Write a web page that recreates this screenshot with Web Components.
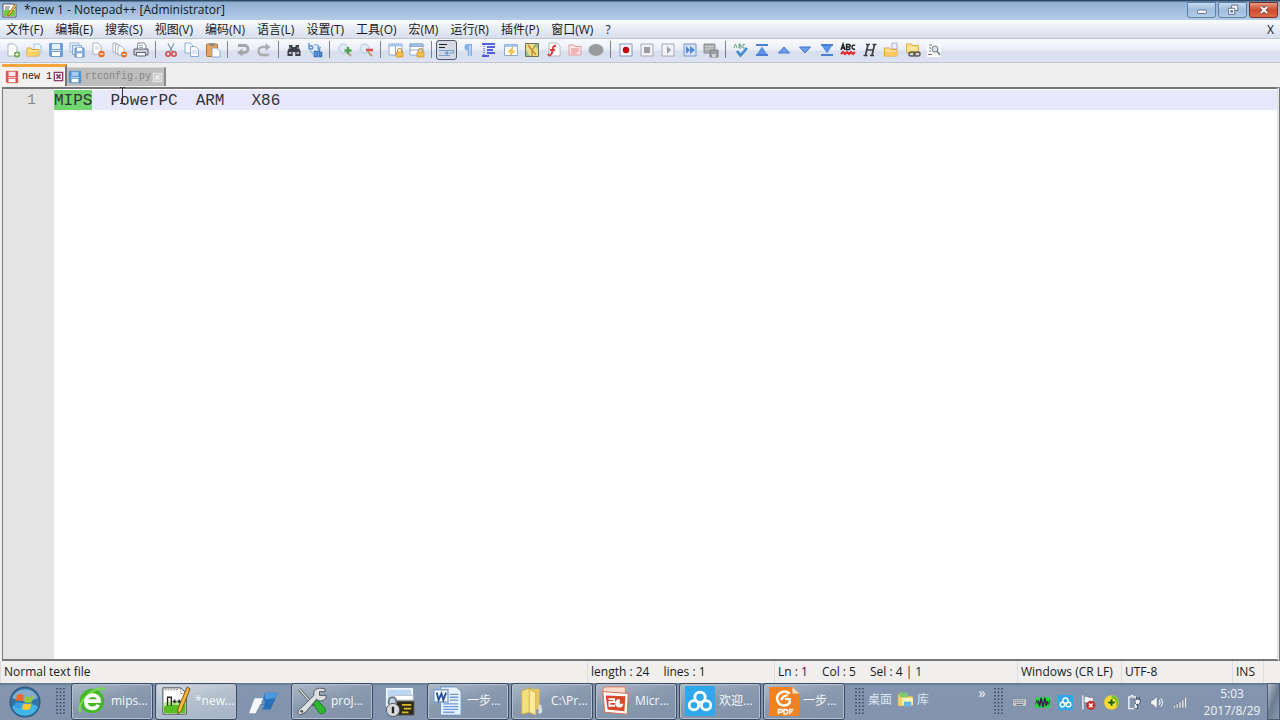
<!DOCTYPE html>
<html lang="zh-CN">
<head>
<meta charset="utf-8">
<title>*new 1 - Notepad++ [Administrator]</title>
<style>
html, body { height: 100%; margin: 0; }
body { font: 12px/16px "Open Sans", "Noto Sans", "Noto Sans CJK SC", sans-serif; color: #1a1a22; overflow: hidden; }
</style>
</head>
<body>
<np-desktop></np-desktop>
<script>
const define = (name, css, html) => {
  customElements.define(name, class extends HTMLElement {
    connectedCallback() {
      if (this.shadowRoot) return;
      const root = this.attachShadow({ mode: 'open' });
      const tpl = document.createElement('template');
      tpl.innerHTML = `<style>*{box-sizing:border-box}${css}</style>${typeof html === 'function' ? html(this) : html}`;
      root.append(tpl.content.cloneNode(true));
    }
  });
};

/* Icon artwork. Small icons use a 16 unit grid, large ones a 32 unit grid. */
const page = (x, y, w = 8, h = 10, s = '#9aa3b5') => `<path d="M${x} ${y}h${w - 3}l3 3v${h - 3}h-${w}z" fill="#fff" stroke="${s}" stroke-width=".8"/>`;
const floppy = (c, l) => `<path d="M1.500 1.500h13v13h-12l-1-1z" fill="${c}" stroke="${c}"/><path d="M4 2h8v5H4z" fill="${l}"/><path d="M4 10h8v4H4z" fill="#fff"/><path d="M3 8.500h10" stroke="#fff" stroke-width=".8"/>`;
const lock = (x, y) => `<path d="M${x + 1.5} ${y + 3}v-1.500a2 2 0 0 1 4 0V${y + 3}" fill="none" stroke="#c9973a" stroke-width="1.200"/><rect x="${x}" y="${y + 3}" width="7" height="5" rx=".5" fill="#f5bf4c" stroke="#d18f22" stroke-width=".7"/>`;
const folder = (x, y, w, h) => `<path d="M${x} ${y}h${w / 2 - 1}l1 1.500h${w / 2}V${y + h}H${x}z" fill="#ffe08a" stroke="#e0a33b" stroke-width=".9"/>`;
const ICONS = {
  app: `<path d="M1 2h10l3 3v10H1z" fill="#fff" stroke="#555"/><path d="M2 8h11v6H2z" fill="#74cc3d"/><path d="M3 5h5M3 7h4" stroke="#666"/><path d="M6 12 13 2l2 1-7 10-2 1z" fill="#edbd3c" stroke="#6c5124" stroke-width=".6"/>`,
  new: page(3, 2, 9, 12) + `<circle cx="12" cy="12.500" r="3" fill="#66a83b"/><path d="M12 10.700v3.600M10.200 12.500h3.600" stroke="#fff"/>`,
  open: `<path d="M8 2h5l2 2v7H8z" fill="#eef5fc" stroke="#8db4d8" stroke-width=".8"/><path d="M1 6h4l1 1.500h7V14H1z" fill="#ffe08a" stroke="#e0a33b"/><path d="M2 10h12l-2 4H1z" fill="#ffd061"/>`,
  save: floppy('#6f9fd8', '#e8f2ff'),
  saveall: `<path d="M1 1h9v9H1z" fill="#e6f0fc" stroke="#9bbbe0"/><path d="M3.500 3.500h9v9h-9z" fill="#e3eefb" stroke="#84aad9"/><path d="M6 6h9v9H6z" fill="#8ab2e2" stroke="#6590c8"/><path d="M8 6h5v3H8zM8 11.500h5V15H8z" fill="#fff"/>`,
  close: page(3, 1, 8, 11) + `<path d="M5 5h4M5 7h4" stroke="#bbb" stroke-width=".7"/><circle cx="11.500" cy="12" r="3.200" fill="#ec6a24"/><path d="M9.700 12h3.600" stroke="#fff" stroke-width="1.200"/>`,
  closeall: page(1, 1, 6, 9) + page(3.5, 2.5, 6, 9) + page(6, 4, 6, 9) + `<circle cx="12" cy="12.500" r="3" fill="#ec6a24"/><path d="M10.300 12.500h3.400" stroke="#fff" stroke-width="1.200"/>`,
  print: `<path d="M5 1h6l2 2v5H4z" fill="#fff" stroke="#7b8290"/><path d="M1 7h14v6H1z" fill="#c8cdd6" stroke="#5c6472"/><path d="M3.500 10.500h9V14h-9z" fill="#f5f6f9" stroke="#5c6472"/><path d="M6 3.500h4M6 5.500h4" stroke="#9aa"/>`,
  cut: `<path d="M5 1.500 9.500 10M11 1.500 6.500 10" stroke="#8294a8" stroke-width="1.200"/><circle cx="5" cy="12" r="2.200" fill="none" stroke="#d84a4a" stroke-width="1.500"/><circle cx="11" cy="12" r="2.200" fill="none" stroke="#d84a4a" stroke-width="1.500"/>`,
  copy: page(1, 1, 8, 10, '#6e9bd6') + page(6.5, 4.5, 8, 10, '#6e9bd6') + `<path d="M8 9h5M8 11h5" stroke="#b8d0ee"/>`,
  paste: `<rect x="1.500" y="2" width="11" height="12.500" rx="1" fill="#eaa35a" stroke="#b87431"/><rect x="4.500" y="1" width="5" height="3" fill="#8a8a8a"/>` + page(7, 6, 8, 9, '#6e9bd6'),
  undo: `<path d="M3 3.500h6.500a3.500 3.500 0 0 1 0 7H6" fill="none" stroke="#a3a5aa" stroke-width="2.800"/><path d="M7.500 6.500v8L2 10.500z" fill="#a3a5aa"/>`,
  redo: `<path d="M10 5H6.500a3.500 3.500 0 0 0 0 8H13" fill="none" stroke="#aaacb0" stroke-width="2.400"/><path d="M9.500 1v8L14.500 5z" fill="#aaacb0"/>`,
  find: `<path d="M3 3h3.500v2h3V3H13v3l1.500 3v5H9.300v-4H6.700v4H1.500V9L3 6z" fill="#394049"/><path d="M3 10h2.500v2H3zM10.500 10H13v2h-2.500z" fill="#aeb6c2"/><path d="M4 5v2M12 5v2" stroke="#9aa"/>`,
  replace: `<path d="M2 1v6M2 4h2.500a1.500 1.500 0 0 1 0 3H2" stroke="#5089d2" stroke-width="1.300" fill="none"/><path d="M7 3c4-1 5 1 5 4M10 5.500l2 2 1.500-2.500" fill="none" stroke="#57a0e0" stroke-width="1.200"/><path d="M7.500 9.500h3v5h-3zM12.500 7.500v7M12.500 10.500h2v4h-2z" stroke="#3975c5" stroke-width="1.600" fill="#7caae4"/><path d="M3 8.500 6 12" stroke="#57a0e0"/>`,
  zoomin: `<circle cx="6.500" cy="6.500" r="4.500" fill="#dfeaf6" stroke="#b2c7de"/><path d="m10 10 4 4" stroke="#b9a176" stroke-width="2"/><path d="M11 5v7M7.500 8.500h7" stroke="#4ea34a" stroke-width="2.400"/>`,
  zoomout: `<circle cx="6.500" cy="6.500" r="4.500" fill="#dfeaf6" stroke="#b2c7de"/><path d="m10 10 4 4" stroke="#b9a176" stroke-width="2"/><path d="M8 8h7" stroke="#e2504a" stroke-width="2.600"/>`,
  syncv: `<path d="M1 2h13v11H1z" fill="#fff" stroke="#8aa8d0"/><path d="M1 2h13v2.500H1z" fill="#a6c5ec"/><path d="M7.500 4v9" stroke="#8aa8d0"/>` + lock(8, 7),
  synch: `<path d="M1 2h13v11H1z" fill="#fff" stroke="#8aa8d0"/><path d="M1 2h13v2.500H1zM1 8h13" fill="#a6c5ec" stroke="#8aa8d0"/>` + lock(8, 7),
  wrap: `<path d="M0 2.500h8M0 5.500h6" stroke="#222" stroke-width="1.200"/><path d="M0 8.500h14.500V11H7M0 13.500h11" stroke="#7f9fd0" stroke-width="1.200" fill="none"/><path d="m9 8.500-4 2.500L9 13.500z" fill="#7f9fd0"/>`,
  pilcrow: `<path d="M7 2h5v12h-1.500V3.500H9.300V14H7.800V8.500C3.500 8.500 3.500 2 7 2z" fill="#7fb2ee"/>`,
  indent: `<path d="M1 2h13M6 5h8M6 8h6M6 11h8M1 14h7" stroke="#2433df" stroke-width="1.700"/><path d="M3 2v14" stroke="#2433df" stroke-dasharray="1 1"/>`,
  udl: `<path d="M1.500 2.500h13v11h-13z" fill="#fdfdf3" stroke="#8aa8d0"/><path d="M1.500 2.500h13V5h-13z" fill="#a6c5ec"/><path d="m10 5-5 5h3l-1 4 5-5H9z" fill="#ffc83d" stroke="#e6a522" stroke-width=".5"/>`,
  map: `<path d="M1.500 1.500h13v13h-13z" fill="#eadf86" stroke="#6d7156"/><path d="M10 2h4v6zM2 8l4 6H2z" fill="#8fc3a0"/><path d="m4 3 8 10M12 3 8 8v6" fill="none" stroke="#c68b3b" stroke-width="1.400"/>`,
  func: page(3, 1, 11, 13, '#aaa') + `<path d="M10 4c-4-1-3 4-4 7s-3 3-4 1M4 8h5" fill="none" stroke="#d93a3a" stroke-width="2"/>`,
  tree: `<path d="M2 3h5l1 1.500h6V13H2z" fill="#fbe6e6" stroke="#e79a9d"/><path d="M4 7h8M4 9h8M4 11h6" stroke="#e48488"/>`,
  monitor: `<ellipse cx="8" cy="8" rx="7.500" ry="6" fill="#999b9e"/>`,
  rec: `<path d="M2 2h12v12H2z" fill="#fafbff" stroke="#8395b5"/><circle cx="8" cy="8" r="3.200" fill="#c9050e"/>`,
  stop: `<path d="M2 2h12v12H2z" fill="#f1f2f6" stroke="#a7aab2"/><path d="M5 5h6v6H5z" fill="#9b9da3"/>`,
  play: `<path d="M2 2h12v12H2z" fill="#f1f2f6" stroke="#a7aab2"/><path d="M7 4v8l4-4z" fill="#9b9da3"/>`,
  ffwd: `<path d="M2 2h12v12H2z" fill="#d5e4fa" stroke="#7d95c2"/><path d="M4 4v8l4-4v4l5-4-5-4v4z" fill="#4b86e0"/>`,
  macrosave: `<path d="M1 2h11v9H1z" fill="#a9abad" stroke="#8c8e90"/><path d="M2 4.500h9M2 7h9" stroke="#d2d3d5"/><path d="M7 8h8v7H7z" fill="#9b9da0" stroke="#818386"/><path d="M9 12h4v3H9z" fill="#d2d3d5"/>`,
  spell: `<path d="M1 6 2.500 2 4 6M6 2v4h1.500a1 1 0 0 0 0-2H6h1a1 1 0 0 0 0-2zM12 2.500H10V6h2" fill="none" stroke="#6ba57d"/><path d="m4 9 3.500 4.500L14 6" fill="none" stroke="#3b8dd0" stroke-width="2.600"/>`,
  top: `<path d="M2 3h12M2 13h12" stroke="#4a7fd4" stroke-width="2"/><path d="M8 4.500 13 12H3z" fill="#5b93e5"/>`,
  up: `<path d="M8 5 13.500 11h-11z" fill="#6c9eea" stroke="#3f74cd"/>`,
  down: `<path d="M8 11 13.500 5h-11z" fill="#6c9eea" stroke="#3f74cd"/>`,
  bottom: `<path d="M2 3h12M2 13h12" stroke="#4a7fd4" stroke-width="2"/><path d="M8 11.500 13 4H3z" fill="#5b93e5"/>`,
  abc: `<path d="M1 8 3 2l2 6M2 6h2.500M6.500 2.500v5H9a1.300 1.300 0 0 0 0-2.500H6.500 9a1.200 1.200 0 0 0 0-2.500zM15 3.500c-4-2-4 5 0 3.500" fill="none" stroke="#1d1d1d" stroke-width="1.400"/><path d="m1 12 2-2 2 2 2-2 2 2 2-2 2 2 2-2" fill="none" stroke="#e02b2b" stroke-width="2"/>`,
  hicon: `<path d="M6 2.500 3.500 13.500M12.500 2.500 10 13.500M5 8h6.500M4 2.500h4M10.500 2.500h4M1.500 13.500h4M8 13.500h4" fill="none" stroke="#3b3f46" stroke-width="1.700"/>`,
  folderup: `<path d="M9 1h5v6H9z" fill="#eef2f6" stroke="#a9b4c2"/><path d="M1.500 6h5l1 1.500h6.500V14H1.500z" fill="#ffdf95" stroke="#e0a33b"/><path d="M2 10h12v4H2z" fill="#ffc562"/>`,
  folderlink: folder(1.5, 2, 12, 9) + `<path d="M3 6h9" stroke="#fff3c8"/><rect x="4" y="10" width="6" height="4" rx="2" fill="none" stroke="#5a5a55" stroke-width="1.500"/><rect x="9" y="10" width="6" height="4" rx="2" fill="none" stroke="#5a5a55" stroke-width="1.500"/>`,
  docfind: `<path d="M1 1h14v14H1z" fill="#fafbfd"/><path d="M3 3h3M3 6h2M3 9h2M2 12.500h4" stroke="#777"/><circle cx="9" cy="7" r="3" fill="#dbe6f2" stroke="#707884"/><path d="m11 9 3 4" stroke="#707884" stroke-width="1.600"/>`,
  diskred: floppy('#e24b4b', '#ffe6e6'),
  diskblue: floppy('#4a8fd0', '#a6cbef'),
  tabclose: `<path d="M2 2h12v12H2z" fill="#fff" stroke="currentColor" stroke-width="2"/><path d="m5 5 6 6M11 5l-6 6" stroke="currentColor" stroke-width="2.400"/>`,
  tabcloseoff: `<path d="M2 2h12v12H2z" fill="#c9c9c9" stroke="#e3e3e3" stroke-width="2"/><path d="m5 5 6 6M11 5l-6 6" stroke="#f0f0f0" stroke-width="2.400"/>`,
  min: `<rect x="3" y="8" width="10" height="4" rx="1" fill="#fff" stroke="#52617a"/>`,
  restore: `<path d="M6.500 2.500h7v6h-7z" fill="#fff" stroke="#52617a"/><path d="M3 6h7v7H3z" fill="#fff" stroke="#52617a"/><path d="M5.500 8.500h2v2h-2z" fill="#8ba3c3" stroke="#52617a"/>`,
  x: `<path d="m4.500 4.500 7 7M11.500 4.500l-7 7" stroke="#6b3636" stroke-width="4"/><path d="m4.500 4.500 7 7M11.500 4.500l-7 7" stroke="#fff" stroke-width="2.500"/>`,
  /* task bar, 32 unit grid */
  orb: `<circle cx="16" cy="16" r="15.500" fill="#2b5477"/><circle cx="16" cy="16" r="14.500" fill="#2f73a8"/><path d="M3 21a14 14 0 0 0 26 0c-7-5-19-5-26 0z" fill="#41b6e6"/><path d="M3 12a14 14 0 0 1 26 0c-8 4-18 4-26 0z" fill="#a5bfd2" opacity=".75"/><path d="M8 9c3-1.500 5-1 7 .500l-1.500 6c-2-1.500-4-1.500-7-.500z" fill="#f0682e"/><path d="M16.500 10c2 1 4 1.500 8 0L23 16c-3 1.300-5 1-8 0z" fill="#93c93d"/><path d="M6 17c3-1 5-1 7 .500L11.500 23c-2-1-4-1.500-6.500-.500z" fill="#3b9ce2"/><path d="M14.500 17.500c3 1 5 1 8-.500L21 23c-3 1.500-5.500 1-8 0z" fill="#ffc72e"/>`,
  browser: `<circle cx="16" cy="16" r="13" fill="#43b826"/><path d="M4 28C-3 20 20-3 30 4" fill="none" stroke="#75d952" stroke-width="2.500"/><path d="M22.500 20c-2 6-13 5-13-3 0-9 14-10 14-1H10" fill="none" stroke="#fff" stroke-width="4"/>`,
  npp: `<path d="M2 2h19l6 6v22H2z" fill="#fff" stroke="#444"/><path d="M3 20c8-4 13 1 23-3v12H3z" fill="#58bf22"/><path d="M3 18c8-4 13 1 23-3v4c-9 3-15-1-23 3z" fill="#b9ea93"/><path d="M21 2v6h6M4 4h15" fill="none" stroke="#777" stroke-dasharray="2 1"/><path d="M7 21v-9h4v9M12.500 16.500h4M14.500 14.500v4M17.500 16.500h4M19.500 14.500v4" fill="none" stroke="#252525" stroke-width="1.400"/><path d="m28 1 3 2-9 23-4 4v-6z" fill="#f0b836" stroke="#705022"/>`,
  vm: `<path d="M6 12h12l-3 6h-3l-5 10H0z" fill="#f5f7fa"/><path d="M17 6h14l-8 18h-9l3-5h-4z" fill="#2870ba"/><path d="M17 6h14l-3 6-11 1z" fill="#4b99de"/><circle cx="15" cy="16" r="2" fill="#7e94b0"/>`,
  tools: `<path d="m2 3 16 18" stroke="#515b52" stroke-width="3"/><path d="m2 3 14 16" stroke="#ccd5d3" stroke-width="1.500"/><path d="m17 18 5-3 8 9c2 5-4 7-7 4z" fill="#2fb82e" stroke="#187d22"/><path d="M3 31c-4-3-1-6 2-8L18 10c-1-6 3-9 12-7v3h-6v4h7v3c-4 4-8 3-10 1L9 28z" fill="#dce0e3" stroke="#4e555b"/><circle cx="5" cy="27" r="1.500" fill="#555"/>`,
  putty: `<path d="M2 2h27v18H2z" fill="#b9d6f5" stroke="#eff4f8" stroke-width="2"/><path d="M10 9h20v5H10z" fill="#fff" stroke="#b6c0ca"/><path d="M12 15h19v15H12z" fill="#2d2b16" stroke="#666"/><path d="M18 19h10M20 23h8M18 27h7" stroke="#d9b928" stroke-width="2"/><circle cx="8.500" cy="24.500" r="7" fill="#d7d9db" stroke="#555"/><path d="M4 18v-3a4 4 0 0 1 8 0v3" fill="none" stroke="#777" stroke-width="2"/><path d="M8.500 21v7" stroke="#222" stroke-width="2.500"/>`,
  word: `<path d="M8 1h17l5 5v25H8z" fill="#e9f3ff" stroke="#6d92c7"/><path d="M18 9h9M18 12h9M18 15h9M11 19h16M11 22h16M11 25h16M11 28h12" stroke="#6f99d6" stroke-width="1.400"/><path d="M1 4h15v13H1z" fill="#f8fbff" stroke="#7da0d6" stroke-width="1.500"/><path d="m4 7 2 8 3-7 2 7 3-8" fill="none" stroke="#25529f" stroke-width="2"/>`,
  folderbig: `<path d="M5 5 14 2v26l-9 2z" fill="#f4df82" stroke="#c9a94a"/><path d="M13 3h11v22H13z" fill="#e6c75c"/><path d="m13 3 7 4v24l-7-3z" fill="#fbeb9c" stroke="#d1b14f"/><path d="M23 20h3l1 8-4 2z" fill="#d8dee3"/>`,
  ppt: `<path d="M2 5c0-3 2-4 4-4h20v8H2z" fill="#fbd9cc" stroke="#e07b5f"/><path d="m2 6 27 2-1 22-24-2z" fill="#fff" stroke="#d9684b"/><path d="m5 10 21 1-1 16-18-2z" fill="#d9472a"/><path d="M8 14h6v3H9v4h6" fill="none" stroke="#fff" stroke-width="2"/><path d="M20 14a4.500 4.500 0 1 0 4 5h-4z" fill="#fff"/>`,
  cloud: `<path d="M0 0h32v32H0z" fill="#30a7ec"/><circle cx="16" cy="12" r="5.500" fill="none" stroke="#fff" stroke-width="3"/><circle cx="9.500" cy="20.500" r="5" fill="none" stroke="#fff" stroke-width="3"/><circle cx="22.500" cy="20.500" r="5" fill="none" stroke="#fff" stroke-width="3"/>`,
  foxit: `<path d="M0 1h25l7 7v24H0z" fill="#f58220"/><path d="M25 1v7h7z" fill="#ffdfbf"/><path d="M22 8c-6-5-15 0-13 7 1 6 9 8 13 3v-4h-5M13 15c1-3 3-5 7-5" fill="none" stroke="#fff" stroke-width="2.600"/><path d="M10 30v-5h3a1 1 0 0 1 0 3h-3M16 25v5h1.500a2.500 2.500 0 0 0 0-5zM22 30v-5h4M22 27.500h3" fill="none" stroke="#fff" stroke-width="1.500"/>`,
  library: `<path d="M2 6h12l3 4h12v18H2z" fill="#f2d56c" stroke="#d8ae42"/><path d="M5 3h15v9H5z" fill="#7ccb73"/><path d="M10 13h20v13H10z" fill="#fff2b5"/><path d="M13 20h14v9H13z" fill="#5fb4e8"/>`,
  keyboard: `<path d="M1 8h30v16H1z" fill="#c7ccd3" stroke="#626d7b"/><path d="M4 12h24M4 16h24" stroke="#56606d" stroke-width="2" stroke-dasharray="2 2"/><path d="M9 20.500h14" stroke="#56606d" stroke-width="2"/>`,
  monitorgraph: `<path d="M0 5h32v22H0z" fill="#17e031"/><path d="m1 20 3-9 3 9M26 12l3 8 3-9" fill="none" stroke="#115c1c" stroke-width="2"/><path d="m7 12 3 12 3-18 4 20 4-20 3 17 3-9" fill="none" stroke="#40145c" stroke-width="3"/>`,
  flag: `<path d="M4 1v30" stroke="#e9edf1" stroke-width="3"/><path d="M7 4c7-3 10 4 19 1v13c-9 3-12-4-19-1z" fill="#f3f5f7" stroke="#59677a"/><circle cx="21" cy="22" r="9" fill="#da2c2c" stroke="#8f1b1b"/><path d="m17 18 8 8M25 18l-8 8" stroke="#fff" stroke-width="3"/>`,
  shield: `<circle cx="16" cy="16" r="15.500" fill="#f4d728"/><path d="M16 1a15 15 0 0 1 10 26c4-8-2-18-10-18z" fill="#6fc22e"/><circle cx="16" cy="16" r="9" fill="#ffe839"/><path d="M16 9v14M9 16h14" stroke="#1b5a20" stroke-width="4.500"/>`,
  power: `<path d="M4 4h14v25H4z" fill="none" stroke="#f2f5f8" stroke-width="3"/><path d="M8 1h6" stroke="#f2f5f8" stroke-width="3"/><path d="M17 9h11v8l-3 3h-5l-3-3zM20 4v5M26 4v5M22.500 20v9h-7" fill="#f2f5f8" stroke="#344256" stroke-width="1.800"/>`,
  volume: `<path d="M2 11h5l8-8v26l-8-8H2z" fill="#f2f5f8" stroke="#56657a"/><path d="M19 11c3 3 3 7 0 10M23 7c5 5 5 13 0 18" fill="none" stroke="#f2f5f8" stroke-width="2.200"/>`,
  signal: `<path d="M1 22h4v6H1zM7 19h4v9H7zM13 15h4v13h-4zM19 10h4v18h-4zM25 5h4v23h-4z" fill="#f2f5f8" stroke="#5a687b"/>`
};
const BIG = new Set(['orb','browser','npp','vm','tools','putty','word','folderbig','ppt','cloud','foxit','library','keyboard','monitorgraph','flag','shield','power','volume','signal']);

define('np-icon', `:host{display:inline-flex;flex:none}svg{display:block;width:var(--icon-size,16px);height:var(--icon-size,16px)}`,
  el => { const n = el.getAttribute('name'), s = BIG.has(n) ? 32 : 16; return `<svg viewBox="0 0 ${s} ${s}" fill="none" aria-hidden="true">${ICONS[n]}</svg>`; });

define('np-titlebar', `
  :host{display:flex;height:20px;padding-left:2px;background:linear-gradient(#2c4966 0 1px,#8fb0d3 2px,#a3bfde 60%,#b4cce6);align-items:center;color:#101820}
  h1{margin:0 0 0 6px;font:inherit;flex:1;white-space:nowrap}
  .buttons{display:flex;gap:2px;align-self:flex-start;padding:2px 2px 0 0}
  button{display:grid;place-items:center;width:29px;height:16px;padding:0;border:1px solid #5f7fa6;border-radius:0 0 3px 3px;background:linear-gradient(#c6d9ee,#9fbcdc 50%,#b2cce8);--icon-size:14px}
  .close{background:linear-gradient(#e59a83,#cf4a2c 50%,#dc6a48);border-color:#7c2d25}`,
  `<np-icon name="app"></np-icon><h1><slot></slot></h1><div class="buttons">
   <button aria-label="Minimize"><np-icon name="min"></np-icon></button><button aria-label="Restore"><np-icon name="restore"></np-icon></button><button class="close" aria-label="Close"><np-icon name="x"></np-icon></button></div>`);

define('np-menubar', `
  :host{display:flex;justify-content:space-between;height:19px;padding:0 6px;background:linear-gradient(#fbfcfe,#e9eef8 40%,#d7deed);border-bottom:1px solid #c0c7d4}
  nav{display:flex;gap:12px}button{padding:0;border:0;background:none;font:inherit;color:inherit;line-height:20px;white-space:nowrap}`,
  `<nav>${['文件(F)','编辑(E)','搜索(S)','视图(V)','编码(N)','语言(L)','设置(T)','工具(O)','宏(M)','运行(R)','插件(P)','窗口(W)','?'].map(t => `<button>${t}</button>`).join('')}</nav><button aria-label="Close document">X</button>`);

const GROUPS = [
  [150, 'new open save saveall close closeall print'], [64, 'cut copy paste'], [43, 'undo redo'], [43, 'find replace'],
  [43, 'zoomin zoomout'], [43, 'syncv synch'], [171, 'wrap pilcrow indent udl map func tree monitor'],
  [107, 'rec stop play ffwd macrosave'], [215, 'spell top up down bottom abc hicon folderup folderlink docfind']];
define('np-toolbar', `
  :host{display:flex;align-items:center;height:24px;padding:0 0 2px 2px;background:linear-gradient(#fafbfe,#eaeef8 45%,#d8dfee 55%,#dce2f0);border-bottom:1px solid #bfc5d1}
  .group{display:grid;grid-auto-flow:column;grid-auto-columns:1fr;justify-items:center}
  hr{width:1px;height:17px;margin:0 4px 0 3px;border:0;background:#7c8390}
  button{display:grid;place-items:center;width:21px;height:20px;padding:0;border:1px solid transparent;border-radius:3px;background:none}
  button[aria-pressed]{border-color:#4f5967;background:#d3dae6}`,
  GROUPS.map(([w, names]) => `<div class="group" style="width:${w}px">${names.split(' ').map(n => `<button aria-label="${n}"${n === 'wrap' ? ' aria-pressed="true"' : ''}><np-icon name="${n}"></np-icon></button>`).join('')}</div>`).join('<hr>'));

define('np-tab', `
  :host{display:flex;align-items:center;gap:1px;height:19px;padding:0 1px;background:#bdbdbd;color:#858585;border-right:2px solid #8b8b8b;border-top:1px solid #d5d5d5;font:10px/16px "Liberation Mono",monospace;--icon-size:14px}
  :host([active]){height:22px;padding-left:3px;background:#f3f2f1;color:#222;border-top:3px solid #f8a63c;border-right-color:#777}
  .label{padding:0;border:0;background:none;font:inherit;color:inherit;display:flex;align-items:center;gap:3px}
  .x{padding:0;border:0;background:none;color:#8c3a63;--icon-size:11px;display:flex}`,
  el => `<button class="label"><np-icon name="${el.getAttribute('icon')}"></np-icon><slot></slot></button><button class="x" aria-label="Close tab"><np-icon name="${el.hasAttribute('active') ? 'tabclose' : 'tabcloseoff'}"></np-icon></button>`);
define('np-tabstrip', `:host{display:flex;align-items:flex-end;height:24px;padding:0 0 1px 2px;background:#efefef}`, `<slot></slot>`);

define('np-editor', `
  :host{position:relative;display:grid;grid-template-columns:51px 1fr;flex:1;min-height:0;margin:0 1px 0 2px;border:2px solid #777;border-width:2px 2px 2px 1px;border-right-color:#e4e4e4;box-shadow:1px 0 #777;background:#fff;font:15px/20px "Liberation Mono",monospace}
  .gutter{background:#e4e4e4;color:#8b8b8b;text-align:right;padding:2px 18px 0 0}
  .text{outline:0;padding-top:1px}
  .line{background:#e8e8fd;color:#33333b;white-space:pre;line-height:22px;height:20px;overflow:hidden}
  .line span{font-size:16px}mark{display:inline-block;height:20px;background:#6fd56f;color:inherit}
  svg{position:absolute;left:116px;top:-2px;width:7px;height:17px}`,
  `<div class="gutter">1</div><div class="text" role="textbox" aria-multiline="true" aria-label="Editor" contenteditable="true" spellcheck="false"><div class="line"><mark><span>MIPS</span></mark>  <span>PowerPC</span>  <span>ARM</span>   <span>X86</span></div></div>
   <svg viewBox="0 0 7 17" fill="none" aria-hidden="true"><path d="M1 .500h2M4 .500h2M3.500 1v15M1 16.500h2M4 16.500h2" stroke="#333"/></svg>`);

define('np-statusbar', `
  :host{display:grid;grid-template-columns:1fr 187px 243px 104px 111px 31px 17px;height:22px;align-items:center;background:#f0efee;line-height:22px;white-space:nowrap}
  div{display:flex;gap:14px;height:22px;padding-left:3px;border-left:1px solid #dcdcdc}div:first-child{border:0;padding-left:2px}`,
  `<div>Normal text file</div><div><span>length : 24</span><span>lines : 1</span></div><div><span>Ln : 1</span><span>Col : 5</span><span>Sel : 4 | 1</span></div><div>Windows (CR LF)</div><div>UTF-8</div><div>INS</div><div></div>`);

define('np-task', `
  :host{display:block}
  button{display:flex;align-items:center;gap:4px;width:82px;height:37px;padding:0 0 2px 5px;border:1px solid #3c4b60;border-radius:3px;box-shadow:inset 0 0 0 1px #b4c0cf;background:linear-gradient(165deg,#adbac9,#8999ae 45%,#7f90a8);color:#f4f8fc;font:inherit;white-space:nowrap;--icon-size:30px}
  :host([active]) button{background:linear-gradient(165deg,#d3dae3,#b3bfcd 50%,#a3b2c5)}
  :host([pinned]) button{width:50px;justify-content:center;border:0;box-shadow:none;background:none;padding:0}`,
  el => `<button aria-label="${el.getAttribute('icon')}"><np-icon name="${el.getAttribute('icon')}"></np-icon><slot></slot></button>`);

define('np-taskbar', `
  :host{display:flex;align-items:center;height:37px;background:linear-gradient(#62738c,#8496af 3px,#8294ad);color:#eef3f8;font-size:12px}
  button{padding:0;border:0;background:none;font:inherit;color:inherit}
  .start{width:50px;display:grid;place-items:center;--icon-size:32px}
  .grip{width:21px}
  .grip svg{display:block;width:9px;height:30px;margin:auto}
  .tasks{display:flex;gap:2px}
  .tools{display:flex;align-items:center;margin-left:6px;--icon-size:17px}
  .tools .grip{width:17px}
  .tools button{display:flex;align-items:center;gap:3px;margin-right:5px;padding-bottom:4px;color:#dce5ee}
  .tray{display:flex;align-items:center;margin-left:auto;height:37px}
  .more{width:12px;padding-bottom:20px;font-size:15px}
  .icons{display:flex;gap:8px;margin-left:3px;padding-top:2px;--icon-size:15px}
  .icons button{display:flex}
  .clock{width:70px;margin-left:9px;text-align:center;line-height:17px}
  .show{width:13px;height:37px;border:1px solid #4e5c70;background:linear-gradient(110deg,#b1bbc8,#6d7c92 50%,#8b9aae)}`,
  () => {
    const grip = `<span class="grip"><svg viewBox="0 0 9 30" fill="none" aria-hidden="true"><path d="M1 1v28M4.500 1v28M8 1v28" stroke="#3b475b" stroke-width="1.500" stroke-dasharray="1.500 2"/></svg></span>`;
    return `<button class="start" aria-label="Start"><np-icon name="orb"></np-icon></button>${grip}
    <div class="tasks"><np-task icon="browser">mips...</np-task><np-task icon="npp" active>*new...</np-task><np-task icon="vm" pinned></np-task><np-task icon="tools">proj...</np-task><np-task icon="putty" pinned></np-task><np-task icon="word">一步...</np-task><np-task icon="folderbig">C:\\Pr...</np-task><np-task icon="ppt">Micr...</np-task><np-task icon="cloud">欢迎...</np-task><np-task icon="foxit">一步...</np-task></div>
    <div class="tools">${grip}<button>桌面</button><button><np-icon name="library"></np-icon>库</button></div>
    <div class="tray"><button class="more" aria-label="More">»</button>${grip}<div class="icons">${['keyboard','monitorgraph','cloud','flag','shield','power','volume','signal'].map(n => `<button aria-label="${n}"><np-icon name="${n}"></np-icon></button>`).join('')}</div><div class="clock"><div>5:03</div><div>2017/8/29</div></div><button class="show" aria-label="Show desktop"></button></div>`;
  });

define('np-desktop', `:host{display:flex;flex-direction:column;height:100vh;background:#efefef}`,
  `<np-titlebar>*new 1 - Notepad++ [Administrator]</np-titlebar><np-menubar></np-menubar><np-toolbar></np-toolbar>
   <np-tabstrip><np-tab icon="diskred" active>new 1</np-tab><np-tab icon="diskblue">rtconfig.py</np-tab></np-tabstrip>
   <np-editor></np-editor><np-statusbar></np-statusbar><np-taskbar></np-taskbar>`);
</script>
</body>
</html>
